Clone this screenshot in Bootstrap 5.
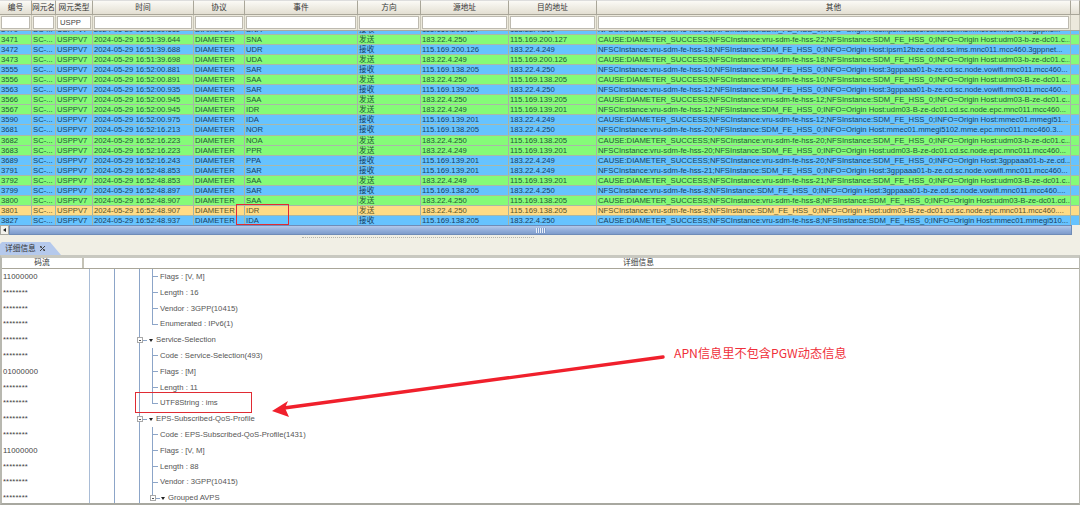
<!DOCTYPE html>
<html lang="zh">
<head>
<meta charset="utf-8">
<title>信令详情</title>
<link href="https://cdn.jsdelivr.net/npm/bootstrap@5.3.0/dist/css/bootstrap.min.css" rel="stylesheet">
<style>
html,body{margin:0;width:1080px;height:505px;overflow:hidden;background:#fff}
.shell{position:relative;width:1080px;height:505px;overflow:hidden;font-family:"Liberation Sans","Noto Sans CJK SC",sans-serif;font-size:7.7px;line-height:1;color:#22404f}
.shell>*{flex:none}
.gridcols{display:grid;grid-template-columns:32px 24px 37px 101px 51px 113px 63px 88px 88px 474px 9px}
.hrow{height:15px;background:#efece1}
.hcell{display:flex;align-items:center;justify-content:center;background:linear-gradient(#fbfaf6,#e3dfd2);border-right:1px solid #a9a699;border-bottom:1px solid #a9a699;border-top:1px solid #ddd;color:#333;white-space:nowrap;overflow:hidden}
.frow{height:16px;background:#ece9dc;border-bottom:1px solid #a8a8a0}
.fcell{padding:1px;border-right:1px solid #c9c6b8;display:flex}
.fcell .form-control{height:13px;min-height:0;padding:0 2px;border-radius:0;border:1px solid #bdbab0;font-size:7.7px;line-height:1;color:#444;background:#fff;font-family:inherit;box-shadow:none}
.bodywrap{height:194px;overflow:hidden;position:relative;background:#66c3ff}
.rows{margin-top:-6px}
.drow{height:10.05px;align-items:center;border-bottom:1px solid #a9b8a8;white-space:nowrap;overflow:hidden}
.drow>span{display:block;padding-left:1px;height:100%;line-height:9.6px;border-right:1px solid #a6b4a4;overflow:hidden;white-space:nowrap}
.g-row{background:#85fb78;color:#1f5a36}
.b-row{background:#66c3ff;color:#173f62}
.o-row{background:#ffdc86;color:#5c5428}
.hbar{height:10px;display:flex;background:#f1efe5}
.hbtn{width:9px;background:#f3f2ec;border:1px solid #a8a8a0;display:flex;align-items:center;justify-content:center}
.hbtn i{display:block;border:2px solid transparent;border-right:3px solid #222;border-left:0}
.hthumb{flex:1;margin-right:8px;background:linear-gradient(#b4c9ea,#8fabd8 60%,#7f9ccb);border:1px solid #6f8cb8;display:flex;align-items:center;justify-content:center}
.grip{width:10px;height:5px;background:repeating-linear-gradient(90deg,#e6eefa 0 1px,#7f9ccb 1px 2px)}
.midband{height:20px;background:#f1efe5;position:relative}
.dots{position:absolute;left:302px;top:2px;width:232px;border-top:1px dotted #b8b6aa}
.tabline{height:13px;margin-top:-13px;display:flex;position:relative}
.tabx{width:61px;height:13px;background:#b5c9ec;clip-path:polygon(0 2px,2px 0,50px 0,61px 100%,0 100%);display:flex;align-items:center;gap:3px;padding-left:5px;color:#333}
.tabx svg{display:block}
.panel{border-left:2px solid #b8b8b0;border-right:1px solid #b8b8b0;border-bottom:2px solid #a8a8a0;border-top:3px solid #c8c8c0;height:250px;overflow:hidden;background:#fff}
.phead{height:11px;display:grid;grid-template-columns:82px 1fr;color:#333;border-bottom:1px solid #a9a699}
.phead div{display:flex;align-items:center;justify-content:center;border-right:2px solid #c4c2b6}
.phead div+div{padding-left:114px;border-right:0}
.treebox{background-image:linear-gradient(#a9bcd6,#a9bcd6),linear-gradient(#8ca5c8,#8ca5c8),linear-gradient(#8ca5c8,#8ca5c8);background-size:1px 100%;background-repeat:no-repeat;background-position:87px 0,112px 0,137px 0}
.trow{height:15.8px;display:flex;align-items:center;color:#555;white-space:nowrap}
.code{width:150px;padding-left:1px;color:#444;letter-spacing:.12px;flex:none;margin-right:-150px}
.elbow{display:block;width:6px;height:100%;margin-left:150px;margin-right:2px;flex:none;background:linear-gradient(#8ca5c8,#8ca5c8) 0 0/1px 100% no-repeat,linear-gradient(#8ca5c8,#8ca5c8) 0 50%/6px 1px no-repeat}
.elbow.end{background:linear-gradient(#8ca5c8,#8ca5c8) 0 0/1px 50% no-repeat,linear-gradient(#8ca5c8,#8ca5c8) 0 50%/6px 1px no-repeat}
.elbow.cont{background:linear-gradient(#8ca5c8,#8ca5c8) 0 0/1px 50% no-repeat;margin-right:-5px}
.exp{width:6px;height:6px;flex:none;border:1px solid #a8a8a8;background:#fff;position:relative;margin-left:135px}
.exp::after{content:"";position:absolute;left:1px;right:1px;top:1.5px;height:1px;background:#555}
.exp.lvl2{margin-left:-3px}
.dash{width:4px;height:1px;background:#8ca5c8;flex:none;margin-right:2px}
.tri{width:0;height:0;border:2px solid transparent;border-top:3px solid #222;border-bottom:0;margin-right:3px;flex:none}
.exp.lvl2+.dash{margin-right:1px}
.mark-box{position:absolute;border:1.5px solid #e02b33;pointer-events:none}
.mark-a{left:236px;top:204px;width:53px;height:21px}
.mark-b{left:135px;top:392px;width:117px;height:21px}
.note-text{position:absolute;left:674px;top:346px;font-size:12.2px;color:#f0303a;white-space:nowrap;font-family:"Noto Sans CJK SC","Liberation Sans",sans-serif;line-height:14px}
.arrow-svg{position:absolute;left:260px;top:345px}
</style>
</head>
<body>
<div class="shell d-flex flex-column">
  <div class="gridcols hrow">
    <div class="hcell">编号</div><div class="hcell">网元名</div><div class="hcell">网元类型</div><div class="hcell">时间</div><div class="hcell">协议</div><div class="hcell">事件</div><div class="hcell">方向</div><div class="hcell">源地址</div><div class="hcell">目的地址</div><div class="hcell">其他</div><div class="hcell"></div>
  </div>
  <div class="gridcols frow">
    <div class="fcell"><input class="form-control" aria-label="编号"></div>
    <div class="fcell"><input class="form-control" aria-label="网元名"></div>
    <div class="fcell"><input class="form-control" aria-label="网元类型" value="USPP"></div>
    <div class="fcell"><input class="form-control" aria-label="时间"></div>
    <div class="fcell"><input class="form-control" aria-label="协议"></div>
    <div class="fcell"><input class="form-control" aria-label="事件"></div>
    <div class="fcell"><input class="form-control" aria-label="方向"></div>
    <div class="fcell"><input class="form-control" aria-label="源地址"></div>
    <div class="fcell"><input class="form-control" aria-label="目的地址"></div>
    <div class="fcell"><input class="form-control" aria-label="其他"></div>
    <div class="fcell"></div>
  </div>
  <div class="bodywrap">
   <div class="rows">
    <div class="gridcols drow b-row"><span>3470</span><span>SC-...</span><span>USPPV7</span><span>2024-05-29 16:51:39.611</span><span>DIAMETER</span><span>SNA</span><span>接收</span><span>115.169.200.127</span><span>183.22.4.250</span><span>NFSCInstance:vru-sdm-fe-hss-22;NFSInstance:SDM_FE_HSS_0;INFO=Origin Host:ipsm12bze.cd.cd.sc.ims.mnc011.mcc460.3gppne...</span><span></span></div>
    <div class="gridcols drow g-row"><span>3471</span><span>SC-...</span><span>USPPV7</span><span>2024-05-29 16:51:39.644</span><span>DIAMETER</span><span>SNA</span><span>发送</span><span>183.22.4.250</span><span>115.169.200.127</span><span>CAUSE:DIAMETER_SUCCESS;NFSCInstance:vru-sdm-fe-hss-22;NFSInstance:SDM_FE_HSS_0;INFO=Origin Host:udm03-b-ze-dc01.c...</span><span></span></div>
    <div class="gridcols drow b-row"><span>3472</span><span>SC-...</span><span>USPPV7</span><span>2024-05-29 16:51:39.688</span><span>DIAMETER</span><span>UDR</span><span>接收</span><span>115.169.200.126</span><span>183.22.4.249</span><span>NFSCInstance:vru-sdm-fe-hss-18;NFSInstance:SDM_FE_HSS_0;INFO=Origin Host:ipsm12bze.cd.cd.sc.ims.mnc011.mcc460.3gppnet...</span><span></span></div>
    <div class="gridcols drow g-row"><span>3473</span><span>SC-...</span><span>USPPV7</span><span>2024-05-29 16:51:39.698</span><span>DIAMETER</span><span>UDA</span><span>发送</span><span>183.22.4.249</span><span>115.169.200.126</span><span>CAUSE:DIAMETER_SUCCESS;NFSCInstance:vru-sdm-fe-hss-18;NFSInstance:SDM_FE_HSS_0;INFO=Origin Host:udm03-b-ze-dc01.c...</span><span></span></div>
    <div class="gridcols drow b-row"><span>3555</span><span>SC-...</span><span>USPPV7</span><span>2024-05-29 16:52:00.881</span><span>DIAMETER</span><span>SAR</span><span>接收</span><span>115.169.138.205</span><span>183.22.4.250</span><span>NFSCInstance:vru-sdm-fe-hss-10;NFSInstance:SDM_FE_HSS_0;INFO=Origin Host:3gppaaa01-b-ze.cd.sc.node.vowifi.mnc011.mcc460...</span><span></span></div>
    <div class="gridcols drow g-row"><span>3556</span><span>SC-...</span><span>USPPV7</span><span>2024-05-29 16:52:00.891</span><span>DIAMETER</span><span>SAA</span><span>发送</span><span>183.22.4.250</span><span>115.169.138.205</span><span>CAUSE:DIAMETER_SUCCESS;NFSCInstance:vru-sdm-fe-hss-10;NFSInstance:SDM_FE_HSS_0;INFO=Origin Host:udm03-B-ze-dc01.c...</span><span></span></div>
    <div class="gridcols drow b-row"><span>3563</span><span>SC-...</span><span>USPPV7</span><span>2024-05-29 16:52:00.935</span><span>DIAMETER</span><span>SAR</span><span>接收</span><span>115.169.139.205</span><span>183.22.4.250</span><span>NFSCInstance:vru-sdm-fe-hss-12;NFSInstance:SDM_FE_HSS_0;INFO=Origin Host:3gppaaa01-b-ze.cd.sc.node.vowifi.mnc011.mcc460...</span><span></span></div>
    <div class="gridcols drow g-row"><span>3566</span><span>SC-...</span><span>USPPV7</span><span>2024-05-29 16:52:00.945</span><span>DIAMETER</span><span>SAA</span><span>发送</span><span>183.22.4.250</span><span>115.169.139.205</span><span>CAUSE:DIAMETER_SUCCESS;NFSCInstance:vru-sdm-fe-hss-12;NFSInstance:SDM_FE_HSS_0;INFO=Origin Host:udm03-B-ze-dc01.c...</span><span></span></div>
    <div class="gridcols drow g-row"><span>3567</span><span>SC-...</span><span>USPPV7</span><span>2024-05-29 16:52:00.945</span><span>DIAMETER</span><span>IDR</span><span>发送</span><span>183.22.4.249</span><span>115.169.139.201</span><span>NFSCInstance:vru-sdm-fe-hss-12;NFSInstance:SDM_FE_HSS_0;INFO=Origin Host:udm03-B-ze-dc01.cd.sc.node.epc.mnc011.mcc460...</span><span></span></div>
    <div class="gridcols drow b-row"><span>3590</span><span>SC-...</span><span>USPPV7</span><span>2024-05-29 16:52:00.975</span><span>DIAMETER</span><span>IDA</span><span>接收</span><span>115.169.139.201</span><span>183.22.4.249</span><span>CAUSE:DIAMETER_SUCCESS;NFSCInstance:vru-sdm-fe-hss-12;NFSInstance:SDM_FE_HSS_0;INFO=Origin Host:mmec01.mmegi51...</span><span></span></div>
    <div class="gridcols drow b-row"><span>3681</span><span>SC-...</span><span>USPPV7</span><span>2024-05-29 16:52:16.213</span><span>DIAMETER</span><span>NOR</span><span>接收</span><span>115.169.138.205</span><span>183.22.4.250</span><span>NFSCInstance:vru-sdm-fe-hss-20;NFSInstance:SDM_FE_HSS_0;INFO=Origin Host:mmec01.mmegi5102.mme.epc.mnc011.mcc460.3...</span><span></span></div>
    <div class="gridcols drow g-row"><span>3682</span><span>SC-...</span><span>USPPV7</span><span>2024-05-29 16:52:16.223</span><span>DIAMETER</span><span>NOA</span><span>发送</span><span>183.22.4.250</span><span>115.169.138.205</span><span>CAUSE:DIAMETER_SUCCESS;NFSCInstance:vru-sdm-fe-hss-20;NFSInstance:SDM_FE_HSS_0;INFO=Origin Host:udm03-b-ze-dc01.c...</span><span></span></div>
    <div class="gridcols drow g-row"><span>3683</span><span>SC-...</span><span>USPPV7</span><span>2024-05-29 16:52:16.223</span><span>DIAMETER</span><span>PPR</span><span>发送</span><span>183.22.4.249</span><span>115.169.139.201</span><span>NFSCInstance:vru-sdm-fe-hss-20;NFSInstance:SDM_FE_HSS_0;INFO=Origin Host:udm03-B-ze-dc01.cd.sc.node.epc.mnc011.mcc460...</span><span></span></div>
    <div class="gridcols drow b-row"><span>3689</span><span>SC-...</span><span>USPPV7</span><span>2024-05-29 16:52:16.243</span><span>DIAMETER</span><span>PPA</span><span>接收</span><span>115.169.139.201</span><span>183.22.4.249</span><span>CAUSE:DIAMETER_SUCCESS;NFSCInstance:vru-sdm-fe-hss-20;NFSInstance:SDM_FE_HSS_0;INFO=Origin Host:3gppaaa01-b-ze.cd...</span><span></span></div>
    <div class="gridcols drow b-row"><span>3791</span><span>SC-...</span><span>USPPV7</span><span>2024-05-29 16:52:48.853</span><span>DIAMETER</span><span>SAR</span><span>接收</span><span>115.169.139.201</span><span>183.22.4.249</span><span>NFSCInstance:vru-sdm-fe-hss-21;NFSInstance:SDM_FE_HSS_0;INFO=Origin Host:3gppaaa01-b-ze.cd.sc.node.vowifi.mnc011.mcc460...</span><span></span></div>
    <div class="gridcols drow g-row"><span>3792</span><span>SC-...</span><span>USPPV7</span><span>2024-05-29 16:52:48.853</span><span>DIAMETER</span><span>SAA</span><span>发送</span><span>183.22.4.249</span><span>115.169.139.201</span><span>CAUSE:DIAMETER_SUCCESS;NFSCInstance:vru-sdm-fe-hss-21;NFSInstance:SDM_FE_HSS_0;INFO=Origin Host:udm03-B-ze-dc01.c...</span><span></span></div>
    <div class="gridcols drow b-row"><span>3799</span><span>SC-...</span><span>USPPV7</span><span>2024-05-29 16:52:48.897</span><span>DIAMETER</span><span>SAR</span><span>接收</span><span>115.169.138.205</span><span>183.22.4.250</span><span>NFSCInstance:vru-sdm-fe-hss-8;NFSInstance:SDM_FE_HSS_0;INFO=Origin Host:3gppaaa01-b-ze.cd.sc.node.vowifi.mnc011.mcc460....</span><span></span></div>
    <div class="gridcols drow g-row"><span>3800</span><span>SC-...</span><span>USPPV7</span><span>2024-05-29 16:52:48.907</span><span>DIAMETER</span><span>SAA</span><span>发送</span><span>183.22.4.250</span><span>115.169.138.205</span><span>CAUSE:DIAMETER_SUCCESS;NFSCInstance:vru-sdm-fe-hss-8;NFSInstance:SDM_FE_HSS_0;INFO=Origin Host:udm03-B-ze-dc01.cd...</span><span></span></div>
    <div class="gridcols drow o-row"><span>3801</span><span>SC-...</span><span>USPPV7</span><span>2024-05-29 16:52:48.907</span><span>DIAMETER</span><span>IDR</span><span>发送</span><span>183.22.4.250</span><span>115.169.138.205</span><span>NFSCInstance:vru-sdm-fe-hss-8;NFSInstance:SDM_FE_HSS_0;INFO=Origin Host:udm03-B-ze-dc01.cd.sc.node.epc.mnc011.mcc460....</span><span></span></div>
    <div class="gridcols drow b-row"><span>3827</span><span>SC-...</span><span>USPPV7</span><span>2024-05-29 16:52:48.937</span><span>DIAMETER</span><span>IDA</span><span>接收</span><span>115.169.138.205</span><span>183.22.4.250</span><span>CAUSE:DIAMETER_SUCCESS;NFSCInstance:vru-sdm-fe-hss-8;NFSInstance:SDM_FE_HSS_0;INFO=Origin Host:mmec01.mmegi510...</span><span></span></div>
   </div>
  </div>
  <div class="hbar"><div class="hbtn"><i></i></div><div class="hthumb"><div class="grip"></div></div></div>
  <div class="midband"><div class="dots"></div></div>
  <div class="tabline">
    <div class="tabx">详细信息 <svg width="7" height="7" viewBox="0 0 7 7" fill="none" stroke="#444" stroke-width="1"><path d="M1 1l5 5M6 1L1 6"/><path d="M1 3L3 1M4 6l2-2" stroke-width=".6"/></svg></div>
  </div>
  <div class="panel">
    <div class="phead"><div>码流</div><div>详细信息</div></div>
    <div class="treebox">
      <div class="trow"><span class="code">11000000</span><span class="elbow"></span>Flags : [V, M]</div>
      <div class="trow"><span class="code">********</span><span class="elbow"></span>Length : 16</div>
      <div class="trow"><span class="code">********</span><span class="elbow"></span>Vendor : 3GPP(10415)</div>
      <div class="trow"><span class="code">********</span><span class="elbow end"></span>Enumerated : IPv6(1)</div>
      <div class="trow"><span class="code">********</span><span class="exp"></span><span class="dash"></span><span class="tri"></span>Service-Selection</div>
      <div class="trow"><span class="code">********</span><span class="elbow"></span>Code : Service-Selection(493)</div>
      <div class="trow"><span class="code">01000000</span><span class="elbow"></span>Flags : [M]</div>
      <div class="trow"><span class="code">********</span><span class="elbow"></span>Length : 11</div>
      <div class="trow"><span class="code">********</span><span class="elbow end"></span>UTF8String : ims</div>
      <div class="trow"><span class="code">********</span><span class="exp"></span><span class="dash"></span><span class="tri"></span>EPS-Subscribed-QoS-Profile</div>
      <div class="trow"><span class="code">********</span><span class="elbow"></span>Code : EPS-Subscribed-QoS-Profile(1431)</div>
      <div class="trow"><span class="code">11000000</span><span class="elbow"></span>Flags : [V, M]</div>
      <div class="trow"><span class="code">********</span><span class="elbow"></span>Length : 88</div>
      <div class="trow"><span class="code">********</span><span class="elbow"></span>Vendor : 3GPP(10415)</div>
      <div class="trow"><span class="code">********</span><span class="elbow cont"></span><span class="exp lvl2"></span><span class="dash"></span><span class="tri"></span>Grouped AVPS</div>
    </div>
  </div>
  <div class="mark-box mark-a"></div>
  <div class="mark-box mark-b"></div>
  <svg class="arrow-svg" width="410" height="75" viewBox="0 0 410 75" aria-hidden="true">
    <path d="M403 12 L24 63" stroke="#f0202c" stroke-width="3.4" stroke-linecap="round" fill="none"/>
    <path d="M12 66 L28 56 L25 63 L29 72 Z" fill="#f0202c"/>
  </svg>
  <div class="note-text">APN信息里不包含PGW动态信息</div>
</div>
<script src="https://cdn.jsdelivr.net/npm/bootstrap@5.3.0/dist/js/bootstrap.bundle.min.js"></script>
</body>
</html>
